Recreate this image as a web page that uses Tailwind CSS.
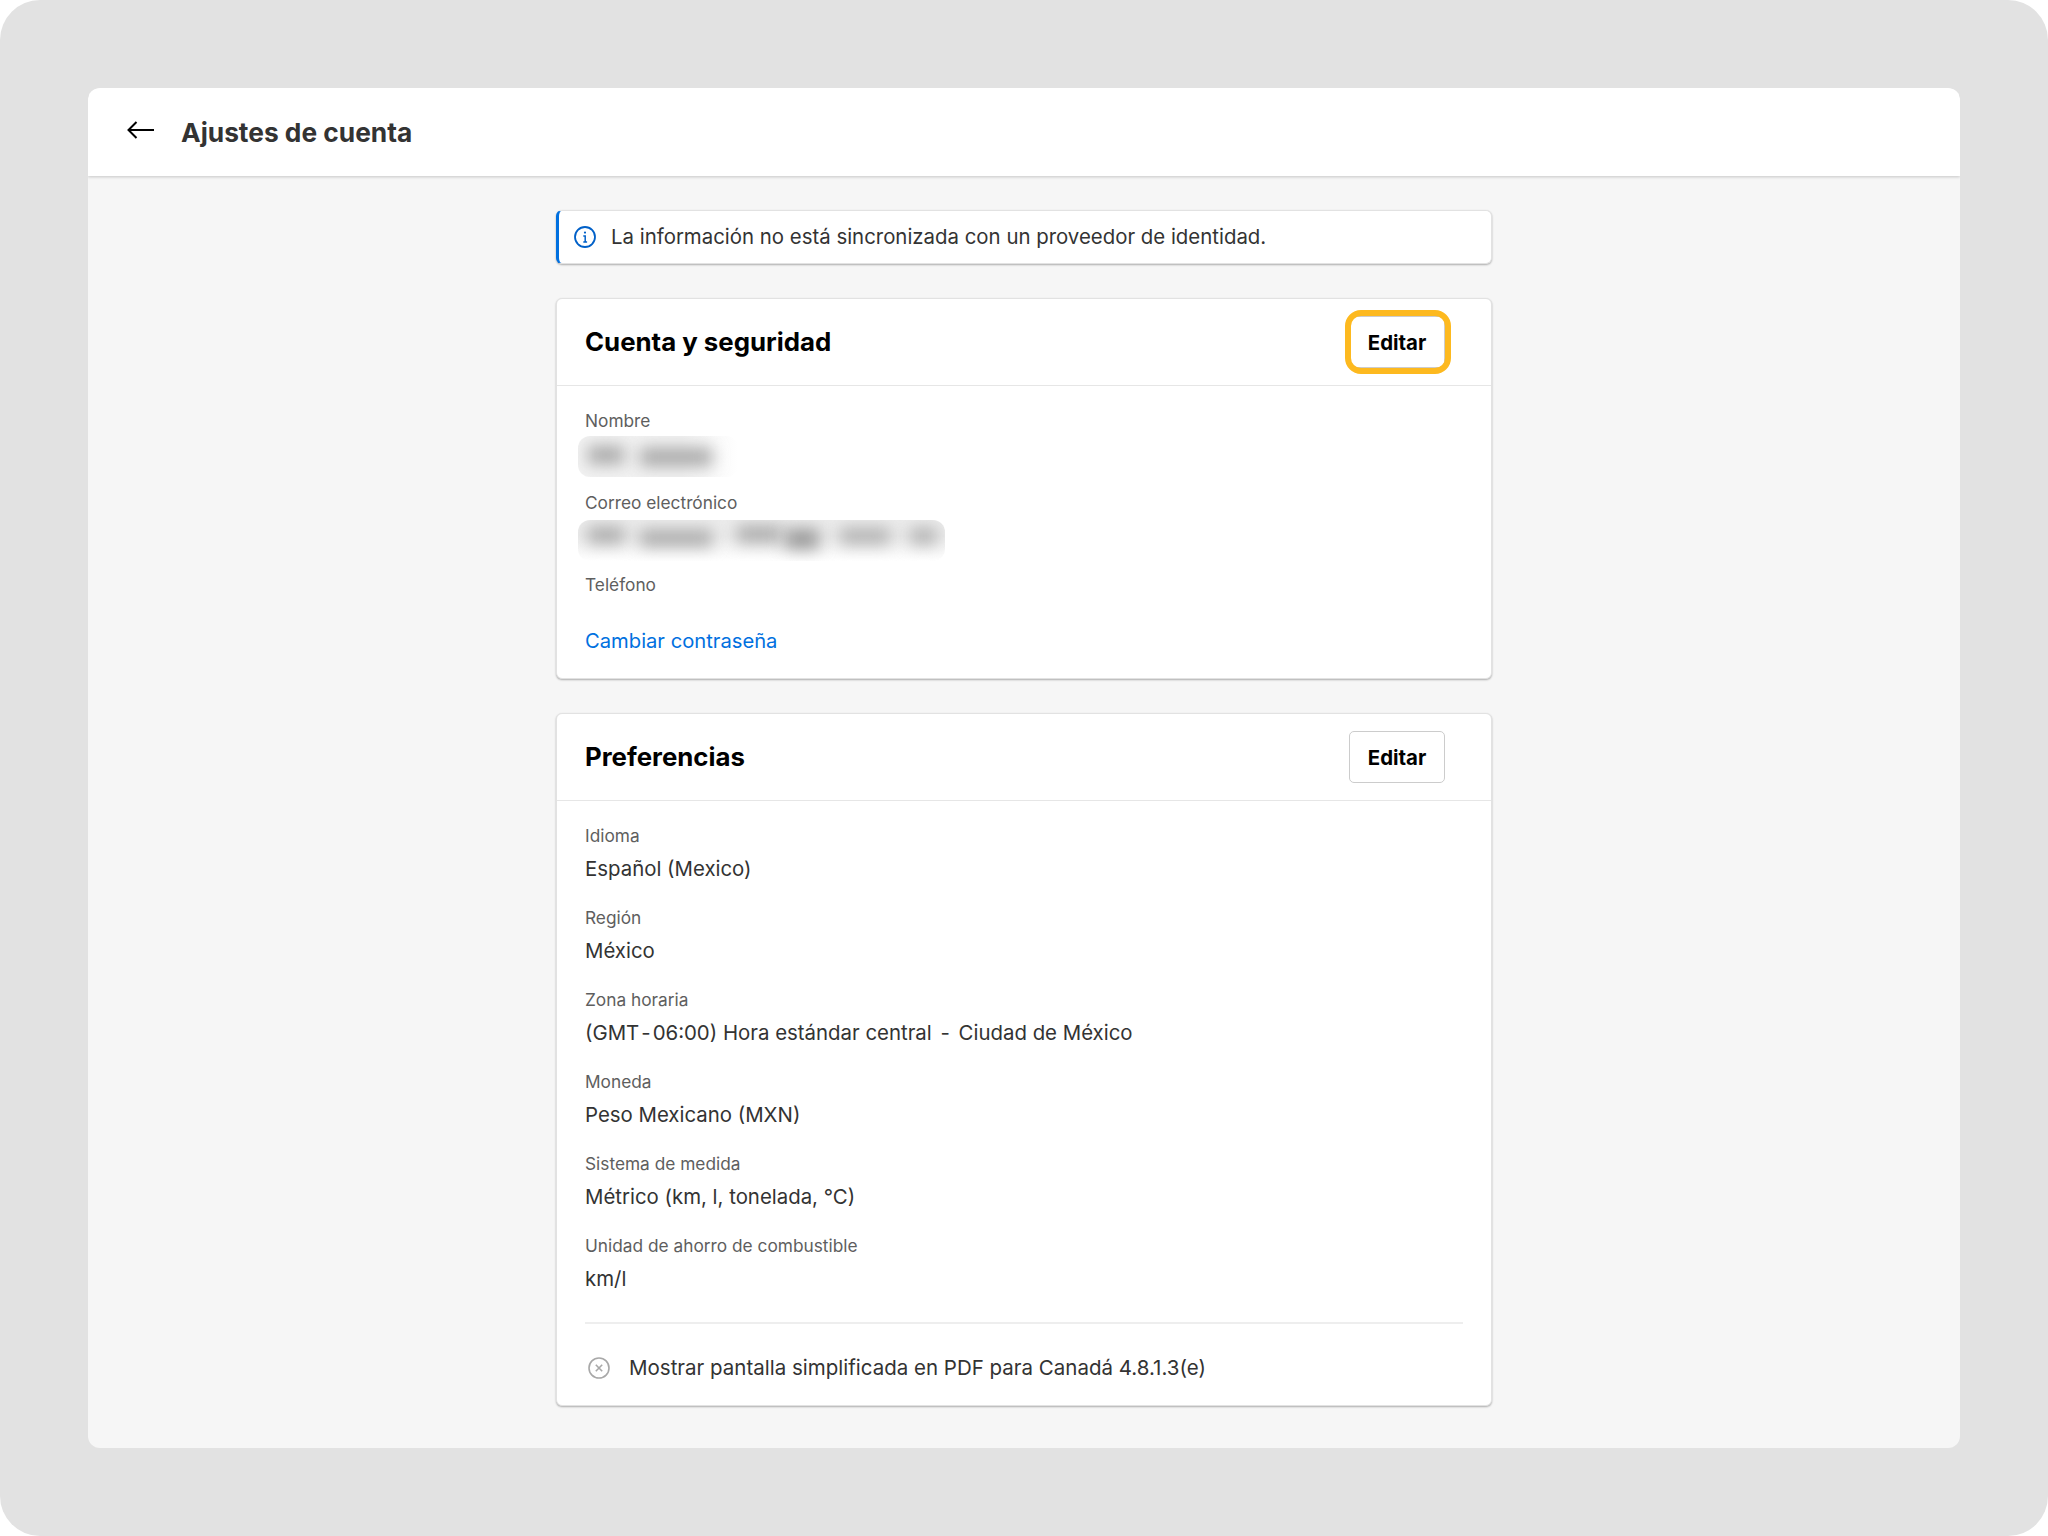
<!DOCTYPE html>
<html lang="en">
<head>
  <meta charset="UTF-8" />
  <title>Ajustes de cuenta</title>
  <script src="https://cdn.jsdelivr.net/npm/@tailwindcss/browser@4"></script>
</head>
<body class="bg-white font-['Inter',sans-serif]">
  <div class="w-[2048px] h-[1536px] bg-[#e2e2e2] rounded-[40px] p-[88px]">
    <div class="h-[1360px] bg-[#f6f6f6] rounded-[12px] overflow-hidden">

      <!-- Header -->
      <header class="h-[88px] bg-white flex items-center pl-[39px] shadow-[0_1px_3px_rgba(0,0,0,0.2)]">
        <svg class="w-[27px] h-[18px] mt-[-4px]" viewBox="0 0 27 18" fill="none" stroke="#000" stroke-width="2">
          <path d="M27 9H1.5M9.5 1L1.5 9l8 8" />
        </svg>
        <h1 class="ml-[27px] mt-[2px] text-[26.3px] leading-[34px] font-bold text-[#333333]">Ajustes de cuenta</h1>
      </header>

      <main class="w-[936px] ml-[468px] pt-[34px]">

        <!-- Info banner -->
        <div class="h-[54px] bg-white rounded-[6px] border border-l-[3px] border-[#e2e2e2] border-l-[#0070e0] flex items-center pl-[15px] shadow-[0_1px_2px_rgba(0,0,0,0.3)]">
          <svg class="w-[22px] h-[22px]" viewBox="0 0 22 22" fill="none" stroke="#0060c8" stroke-width="1.8">
            <circle cx="11" cy="11" r="10" />
            <path d="M9.3 10h1.9v6M9.3 16h3.8" stroke-width="1.5" />
            <circle cx="11" cy="6.6" r="1.1" fill="#0060c8" stroke="none" />
          </svg>
          <p class="ml-[15px] text-[20.4px] text-[#333333]">La información no está sincronizada con un proveedor de identidad.</p>
        </div>

        <!-- Cuenta y seguridad -->
        <section class="mt-[34px] h-[381px] bg-white rounded-[6px] border border-[#e2e2e2] shadow-[0_1px_2px_rgba(0,0,0,0.3)]">
          <div class="h-[87px] border-b border-[#e6e6e6] flex items-center justify-between pl-[28px] pr-[46px]">
            <h2 class="text-[25.8px] font-bold text-black">Cuenta y seguridad</h2>
            <div class="relative">
              <button class="w-[96px] h-[52px] pt-[2px] bg-white rounded-[5px] border border-[#cccccc] text-[20.4px] font-bold text-black">Editar</button>
              <div class="absolute left-[-4px] right-[-6px] top-[-6px] bottom-[-6px] rounded-[16px] border-[6px] border-[#fdb91f]"></div>
            </div>
          </div>
          <div class="pl-[28px] pt-[22px]">
            <div class="h-[82px]">
              <p class="text-[17.3px] leading-[26px] text-[#5e5e5e]">Nombre</p>
              <div class="relative ml-[-7px] mt-[2px] w-[160px] h-[41px] rounded-[12px] bg-gradient-to-r from-[#f2f2f2] from-65% to-white overflow-hidden">
                <div class="absolute left-[10px] top-[10px] w-[36px] h-[18px] bg-[#a8a8a8] blur-[8px]"></div>
                <div class="absolute left-[62px] top-[12px] w-[72px] h-[18px] bg-[#a8a8a8] blur-[8px]"></div>
              </div>
            </div>
            <div class="h-[82px]">
              <p class="text-[17.3px] leading-[26px] text-[#5e5e5e]">Correo electrónico</p>
              <div class="relative ml-[-7px] mt-[4px] w-[367px] h-[41px] rounded-[12px] bg-gradient-to-b from-[#ececec] from-40% to-white overflow-hidden">
                <div class="absolute left-[10px] top-[7px] w-[36px] h-[16px] bg-[#a8a8a8] blur-[8px]"></div>
                <div class="absolute left-[62px] top-[10px] w-[72px] h-[16px] bg-[#a8a8a8] blur-[8px]"></div>
                <div class="absolute left-[159px] top-[6px] w-[44px] h-[16px] bg-[#a8a8a8] blur-[8px]"></div>
                <div class="absolute left-[207px] top-[9px] w-[34px] h-[20px] bg-[#989898] blur-[8px]"></div>
                <div class="absolute left-[262px] top-[8px] w-[50px] h-[16px] bg-[#b0b0b0] blur-[8px]"></div>
                <div class="absolute left-[332px] top-[8px] w-[27px] h-[16px] bg-[#b0b0b0] blur-[8px]"></div>
              </div>
            </div>
            <p class="text-[17.3px] leading-[26px] text-[#5e5e5e]">Teléfono</p>
            <a href="#" class="block mt-[29px] text-[20.2px] leading-[28px] text-[#0070e0]">Cambiar contraseña</a>
          </div>
        </section>

        <!-- Preferencias -->
        <section class="mt-[34px] h-[693px] bg-white rounded-[6px] border border-[#e2e2e2] shadow-[0_1px_2px_rgba(0,0,0,0.3)]">
          <div class="h-[87px] border-b border-[#e6e6e6] flex items-center justify-between pl-[28px] pr-[46px]">
            <h2 class="mt-[1px] text-[25.8px] font-bold text-black">Preferencias</h2>
            <button class="w-[96px] h-[52px] pt-[2px] bg-white rounded-[5px] border border-[#cccccc] text-[20.4px] font-bold text-black">Editar</button>
          </div>
          <div class="px-[28px] pt-[22px]">
            <div class="h-[82px]">
              <p class="text-[17.3px] leading-[26px] text-[#5e5e5e]">Idioma</p>
              <p class="mt-[6px] text-[20.4px] leading-[28px] text-[#333333]">Español (Mexico)</p>
            </div>
            <div class="h-[82px]">
              <p class="text-[17.3px] leading-[26px] text-[#5e5e5e]">Región</p>
              <p class="mt-[6px] text-[20.4px] leading-[28px] text-[#333333]">México</p>
            </div>
            <div class="h-[82px]">
              <p class="text-[17.3px] leading-[26px] text-[#5e5e5e]">Zona horaria</p>
              <p class="mt-[6px] text-[20.4px] leading-[28px] text-[#333333]">(GMT<span class="mx-[2px]">-</span>06:00) Hora estándar central <span class="mx-[3px]">-</span> Ciudad de México</p>
            </div>
            <div class="h-[82px]">
              <p class="text-[17.3px] leading-[26px] text-[#5e5e5e]">Moneda</p>
              <p class="mt-[6px] text-[20.4px] leading-[28px] text-[#333333]">Peso Mexicano (MXN)</p>
            </div>
            <div class="h-[82px]">
              <p class="text-[17.3px] leading-[26px] text-[#5e5e5e]">Sistema de medida</p>
              <p class="mt-[6px] text-[20.4px] leading-[28px] text-[#333333]">Métrico (km, l, tonelada, °C)</p>
            </div>
            <div class="h-[82px]">
              <p class="text-[17.3px] leading-[26px] text-[#5e5e5e]">Unidad de ahorro de combustible</p>
              <p class="mt-[6px] text-[20.4px] leading-[28px] text-[#333333]">km/l</p>
            </div>
            <div class="mt-[7px] border-t-2 border-[#eeeeee] pt-[30px] flex items-center">
              <svg class="ml-[3px] w-[22px] h-[22px]" viewBox="0 0 22 22" fill="none" stroke="#a8a8a8" stroke-width="1.6">
                <circle cx="11" cy="11" r="10" />
                <path d="M7.8 7.8l6.4 6.4M14.2 7.8l-6.4 6.4" />
              </svg>
              <p class="ml-[19px] text-[20.5px] leading-[28px] text-[#333333]">Mostrar pantalla simplificada en PDF para Canadá 4.8.1.3(e)</p>
            </div>
          </div>
        </section>

      </main>
    </div>
  </div>
</body>
</html>
